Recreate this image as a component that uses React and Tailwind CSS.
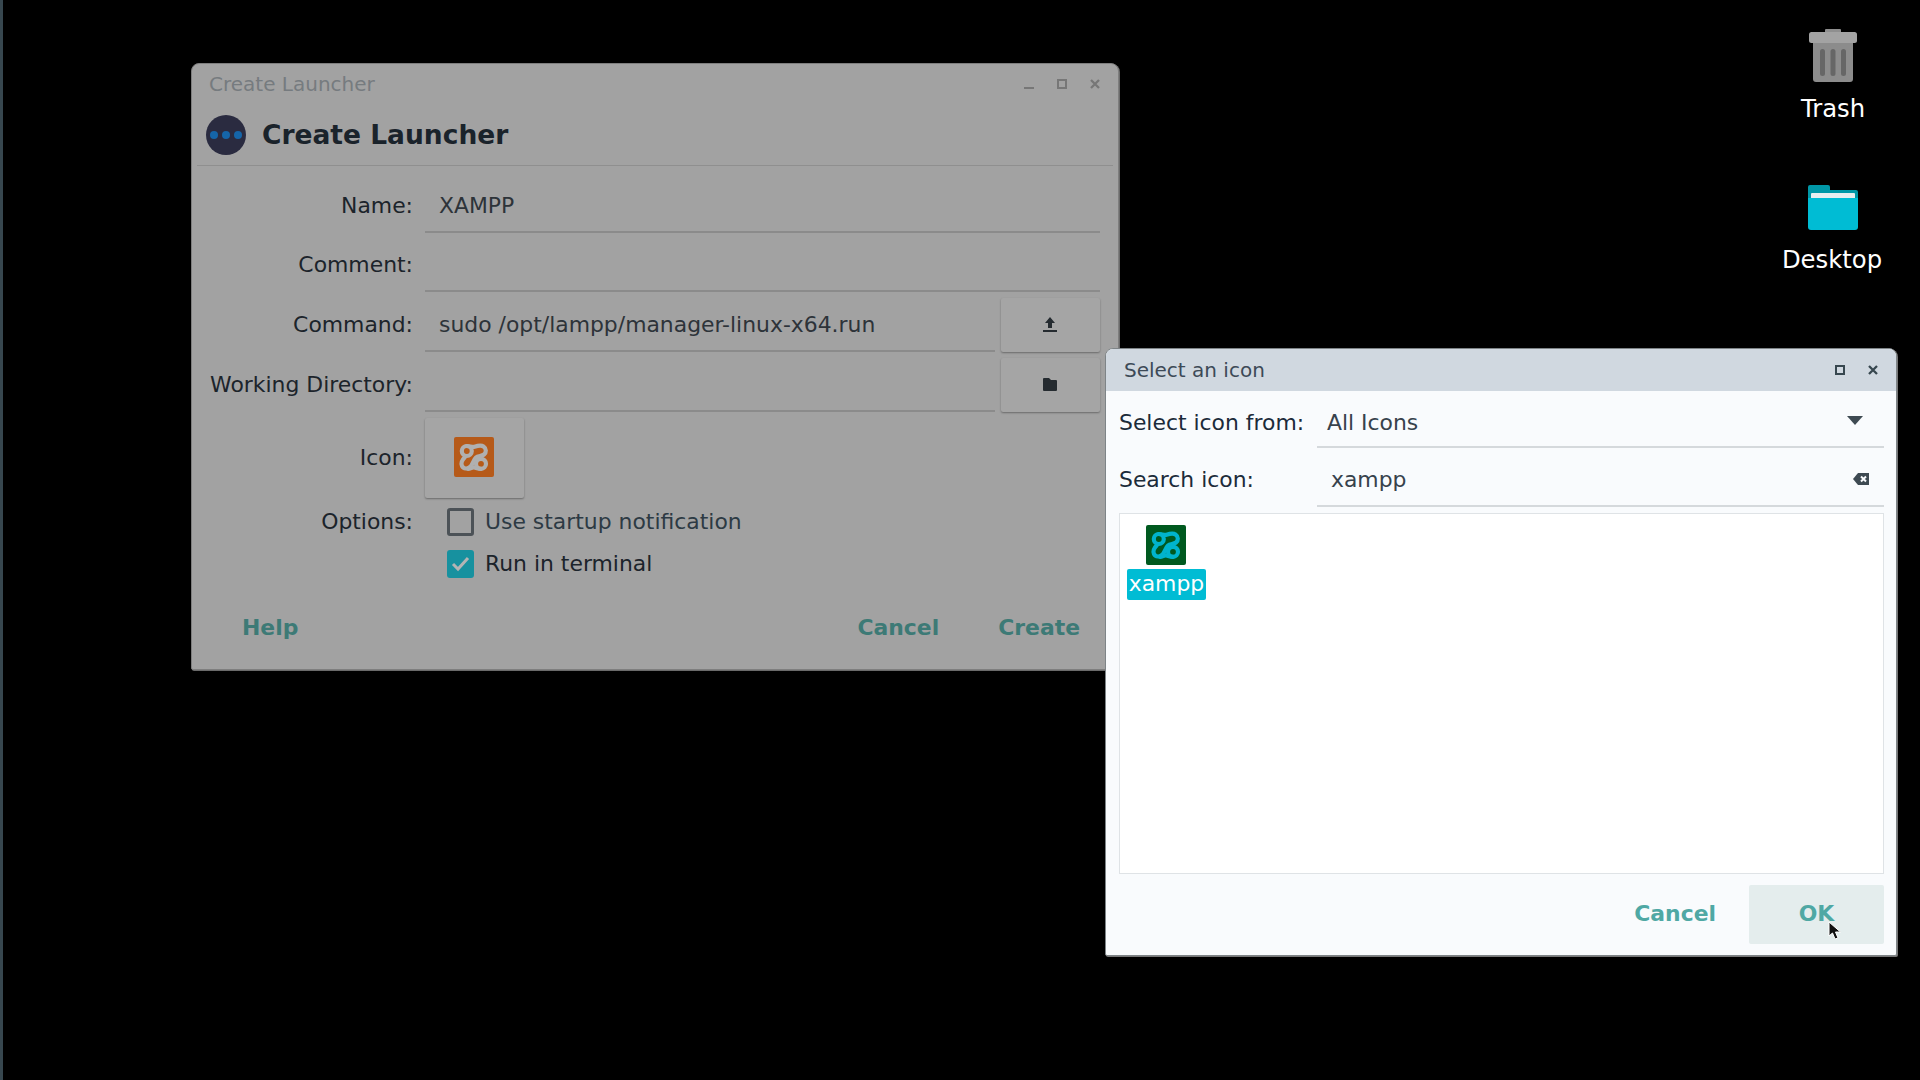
import React from 'react';

const XamppIcon = ({ boxClass, strokeClass }) => (
  <svg viewBox="0 0 40 40" className="block h-10 w-10">
    <rect x="0" y="0" width="40" height="40" rx="2" className={boxClass} />
    <g fill="none" strokeWidth="4.200" strokeLinecap="round" className={strokeClass}>
      <circle cx="12.800" cy="14" r="5" />
      <circle cx="27" cy="26.800" r="5" />
      <path d="M12.800 9 C16 9 18 10.500 20.500 9.800 C23.500 8.800 27 7.800 29.500 9.500 C32.500 11.500 32.500 15.500 30 17.500 C27.500 19.500 24 18.500 22 20.500 C19.500 23 19 26.500 16.500 29.500 C13.500 32.500 9.500 32 8 29 C6.500 26 8.500 22.500 11 20" />
      <path d="M14 31.800 C17 31.500 18.500 30 20.500 30.500 C22.500 31 24.500 31.800 27 31.800" />
    </g>
  </svg>
);

const FormRow = ({ label, children, height = 'h-[54px]' }) => (
  <div className={`flex ${height} items-center`}>
    <div className="w-[221px] shrink-0 text-right text-[#1c242b]">{label}</div>
    <div className="ml-[12px] flex h-full min-w-0 flex-1">{children}</div>
  </div>
);

const Entry = ({ value }) => (
  <div className="flex h-full min-w-0 flex-1 items-center border-b-2 border-[#8b8b8b] pl-[14px] pt-[3px] text-[#2d3339]">{value}</div>
);

const SideButton = ({ children }) => (
  <div className="ml-[6px] flex h-full w-[99px] shrink-0 items-center justify-center rounded-[2px] bg-[#a5a5a5] pb-[2px] pr-[2px] shadow-[0_1px_2px_rgba(0,0,0,0.35)]">
    {children}
  </div>
);

const Desktop = ({ className, label, labelClass, children }) => (
  <div className={`absolute flex w-[120px] flex-col items-center text-[24.300px] text-white ${className}`}>
    {children}
    <span className={`leading-[28px] ${labelClass}`}>{label}</span>
  </div>
);

export default function App() {
  return (
    <div className="relative h-[1080px] w-[1920px] overflow-hidden bg-black font-['DejaVu_Sans',sans-serif] text-[21.900px]">
      <div className="absolute left-0 top-0 h-full w-[3px] bg-[#37474f]" />

      <Desktop className="left-[1773px] top-[28px]" label="Trash" labelClass="mt-[11px]">
        <svg width="48" height="56" viewBox="0 0 48 56" className="block">
          <rect x="16" y="1" width="16" height="6" rx="1" fill="#8f8f8f" />
          <rect x="0" y="4" width="48" height="11" rx="2.500" fill="#a3a3a3" />
          <path d="M4 15H44V51a3 3 0 0 1-3 3H7a3 3 0 0 1-3-3Z" fill="#8c8c8c" />
          <rect x="11" y="21" width="5" height="27" rx="2.500" fill="#666" />
          <rect x="21.500" y="21" width="5" height="27" rx="2.500" fill="#666" />
          <rect x="32" y="21" width="5" height="27" rx="2.500" fill="#666" />
        </svg>
      </Desktop>

      <Desktop className="left-[1772px] top-[185px]" label="Desktop" labelClass="mt-[16px]">
        <svg width="50" height="45" viewBox="0 0 50 45" className="ml-[2px] block">
          <path d="M2 0H20a2 2 0 0 1 2 2V5H48a2 2 0 0 1 2 2V20H0V2a2 2 0 0 1 2-2Z" fill="#0097a7" />
          <rect x="3" y="8" width="44" height="12" rx="1" fill="#e8eef0" />
          <path d="M0 13H50V42a3 3 0 0 1-3 3H3a3 3 0 0 1-3-3Z" fill="#00bcd4" />
        </svg>
      </Desktop>

      {/* parent window, dimmed while the dialog is open */}
      <div className="absolute left-[191px] top-[63px] flex h-[607px] w-[928px] flex-col rounded-t-[8px] rounded-b-[2px] border border-[#7e7e7e] bg-[#a2a2a2] shadow-[1px_1px_0_#6a6a6a]">
        <div className="flex h-[40px] shrink-0 items-center pl-[17px] pr-[18px] text-[20px] text-[#767b7f]">
          <span className="flex-1">Create Launcher</span>
          <div className="flex items-center gap-[23px]">
            <svg width="10" height="10" viewBox="0 0 10 10" className="block"><rect y="8" width="10" height="2" fill="#777" /></svg>
            <svg width="10" height="10" viewBox="0 0 10 10" className="block"><rect x="1" y="1" width="8" height="8" fill="none" stroke="#777" strokeWidth="2" /></svg>
            <svg width="10" height="10" viewBox="0 0 10 10" className="block"><path d="M1 1L9 9M9 1L1 9" stroke="#777" strokeWidth="2.300" /></svg>
          </div>
        </div>

        <div className="mx-[5px] flex h-[62px] shrink-0 items-center border-b border-[#8f8f8f] pl-[9px]">
          <svg width="40" height="40" viewBox="0 0 40 40" className="block">
            <circle cx="20" cy="20" r="20" fill="#2a2b40" />
            <circle cx="8" cy="20" r="4" fill="#1565a8" />
            <circle cx="20" cy="20" r="4" fill="#1565a8" />
            <circle cx="32" cy="20" r="4" fill="#1565a8" />
          </svg>
          <span className="ml-[16px] text-[26.500px] font-bold text-[#1a232b]">Create Launcher</span>
        </div>

        <div className="flex flex-col pr-[18px] pt-[13px]">
          <FormRow label="Name:"><Entry value="XAMPP" /></FormRow>
          <div className="h-[5px]" />
          <FormRow label="Comment:"><Entry value="" /></FormRow>
          <div className="h-[6px]" />
          <FormRow label="Command:">
            <Entry value="sudo /opt/lampp/manager-linux-x64.run" />
            <SideButton>
              <svg width="14" height="15" viewBox="0 0 14 15" className="block">
                <path d="M7 0L12 6H9V11H5V6H2Z" fill="#252b30" />
                <rect y="13" width="14" height="2" fill="#252b30" />
              </svg>
            </SideButton>
          </FormRow>
          <div className="h-[6px]" />
          <FormRow label="Working Directory:">
            <Entry value="" />
            <SideButton>
              <svg width="14" height="13" viewBox="0 0 14 13" className="block">
                <path d="M0 1a1 1 0 0 1 1-1H6L8 2H13a1 1 0 0 1 1 1V12a1 1 0 0 1-1 1H1a1 1 0 0 1-1-1Z" fill="#252b30" />
              </svg>
            </SideButton>
          </FormRow>
          <div className="h-[6px]" />
          <FormRow label="Icon:" height="h-[80px]">
            <div className="flex h-full w-[99px] items-center justify-center rounded-[2px] bg-[#a5a5a5] pb-[2px] pr-[2px] shadow-[0_1px_2px_rgba(0,0,0,0.35)]">
              <XamppIcon boxClass="fill-[#b65a19]" strokeClass="stroke-[#b0b0b0]" />
            </div>
          </FormRow>
          <div className="mt-[10px] flex h-[28px] items-center">
            <div className="w-[221px] shrink-0 text-right text-[#1c242b]">Options:</div>
            <div className="ml-[34px] h-[28px] w-[27px] rounded-[3px] border-[3px] border-[#4c5257]" />
            <span className="ml-[11px] text-[#2d3a44]">Use startup notification</span>
          </div>
          <div className="mt-[14px] flex h-[28px] items-center">
            <div className="ml-[255px] flex h-[28px] w-[27px] items-center justify-center rounded-[3px] bg-[#17919f]">
              <svg width="19" height="16" viewBox="0 0 19 16" className="block">
                <path d="M2 8L7 13L17 2" fill="none" stroke="#b4b4b4" strokeWidth="3" />
              </svg>
            </div>
            <span className="ml-[11px] text-[#1c242b]">Run in terminal</span>
          </div>
        </div>

        <div className="mt-[34px] flex items-center pl-[50px] pr-[38px] font-bold text-[#3d7a76]">
          <span className="flex-1">Help</span>
          <span>Cancel</span>
          <span className="ml-[59px]">Create</span>
        </div>
      </div>

      {/* icon picker dialog */}
      <div className="absolute left-[1105px] top-[348px] flex h-[608px] w-[792px] flex-col rounded-t-[8px] rounded-b-[2px] border border-[#7e8487] bg-[#f9fbfd] shadow-[1px_1px_0_#777]">
        <div className="flex h-[42px] shrink-0 items-center rounded-t-[7px] bg-[#d0d8e0] pl-[18px] pr-[18px] text-[20px] text-[#3d4a57]">
          <span className="flex-1">Select an icon</span>
          <div className="flex items-center gap-[23px]">
            <svg width="10" height="10" viewBox="0 0 10 10" className="block"><rect x="1" y="1" width="8" height="8" fill="none" stroke="#37474f" strokeWidth="2" /></svg>
            <svg width="10" height="10" viewBox="0 0 10 10" className="block"><path d="M1 1L9 9M9 1L1 9" stroke="#37474f" strokeWidth="2.300" /></svg>
          </div>
        </div>

        <div className="flex flex-col pl-[13px] pr-[12px]">
          <div className="flex h-[57px] items-center pt-[7px]">
            <span className="w-[198px] shrink-0 text-[#1c2b3a]">Select icon from:</span>
            <div className="-mt-[7px] flex h-[57px] flex-1 items-center border-b-2 border-[#d5d9dc] pl-[10px] pr-[21px] pt-[10px] text-[#37424c]">
              <span className="flex-1">All Icons</span>
              <svg width="16" height="9" viewBox="0 0 16 9" className="-mt-[7px] block"><path d="M0 0H16L8 9Z" fill="#3e4a52" /></svg>
            </div>
          </div>
          <div className="mt-[3px] flex h-[56px] items-center pt-[3px]">
            <span className="w-[198px] shrink-0 text-[#1c2b3a]">Search icon:</span>
            <div className="-mt-[3px] flex h-[56px] flex-1 items-center border-b-2 border-[#d5d9dc] pl-[14px] pr-[15px] pt-[4px] text-[#37424c]">
              <span className="flex-1">xampp</span>
              <svg width="16" height="12" viewBox="0 0 16 12" className="-mt-[3px] block">
                <path d="M5 0H16V12H5L0 6Z" fill="#3e4a52" />
                <path d="M8 3.500L13 8.500M13 3.500L8 8.500" stroke="#f9fbfd" strokeWidth="2" />
              </svg>
            </div>
          </div>
          <div className="mt-[6px] h-[361px] border border-[#dfe3e6] bg-white pl-[7px] pt-[11px]">
            <div className="flex w-[79px] flex-col items-center">
              <div className="-translate-x-[1px]">
                <XamppIcon boxClass="fill-[#00591f]" strokeClass="stroke-[#00b4cc]" />
              </div>
              <span className="mt-[4px] flex h-[31px] w-full items-center justify-center rounded-[2px] bg-[#00bcd4] text-white">xampp</span>
            </div>
          </div>
          <div className="mt-[11px] flex h-[59px] items-center justify-end font-bold text-[#4fa8a4]">
            <span>Cancel</span>
            <div className="relative ml-[33px] flex h-full w-[135px] items-center justify-center rounded-[2px] bg-[#e4eded]">
              OK
              <svg width="14" height="19" viewBox="0 0 14 19" className="absolute left-[79px] top-[36px] block">
                <path d="M1 1V15L4.500 12L7 18L10 17L7.500 11H12.500Z" fill="#111" stroke="#fff" strokeWidth="1" />
              </svg>
            </div>
          </div>
        </div>
      </div>
    </div>
  );
}
